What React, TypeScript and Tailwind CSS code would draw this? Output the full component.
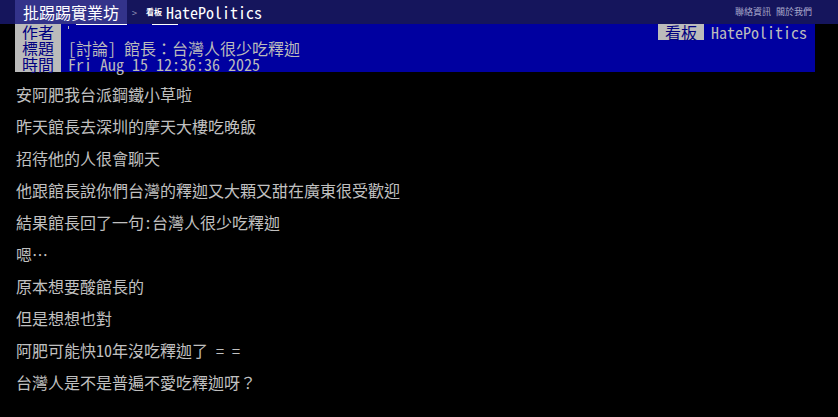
import React from 'react';

const MONO = "font-['Noto_Sans_Mono_CJK_TC','Noto_Sans_Mono_CJK_JP','Liberation_Mono','Noto_Sans_CJK_TC',monospace]";

const lines = [
    '安阿肥我台派鋼鐵小草啦',
    '昨天館長去深圳的摩天大樓吃晚飯',
    '招待他的人很會聊天',
    '他跟館長說你們台灣的釋迦又大顆又甜在廣東很受歡迎',
    '結果館長回了一句:台灣人很少吃釋迦',
    '嗯…',
    '原本想要酸館長的',
    '但是想想也對',
    '阿肥可能快10年沒吃釋迦了 = =',
    '台灣人是不是普遍不愛吃釋迦呀？',
];

const MetaRow: React.FC<{ label: string; children?: React.ReactNode; right?: React.ReactNode }> = ({ label, children, right }) => (
    <div className="flex h-4 leading-4">
        <span className="w-[46px] shrink-0 bg-[#bbbbbb] text-[#000080] text-center">{label}</span>
        <span className="flex-1 pl-[7px] text-[#bbbbbb] relative whitespace-nowrap">{children}</span>
        {right}
    </div>
);

export default function App() {
    return (
        <div className={`min-h-[417px] bg-black text-[16px] ${MONO}`}>
            {/* topbar */}
            <div className="h-6 bg-[#15155c] flex items-stretch pl-[15px] pr-[26px]">
                <span className="bg-[#33338a] text-white px-[8px] leading-6 text-[16px] font-['Noto_Sans_CJK_TC',sans-serif]">批踢踢實業坊</span>
                <span className="ml-[5px] text-[#9999bb] text-[10px] leading-6 pt-[1px]">&gt;</span>
                <span className="ml-[9px] text-white text-[8px] leading-6 font-bold font-['Noto_Sans_CJK_TC',sans-serif]">看板</span>
                <span className="ml-[4px] text-white leading-6">HatePolitics</span>
                <span className="ml-auto text-[#aaaacc] text-[9px] leading-6 font-['Noto_Sans_CJK_TC',sans-serif] flex gap-[5px]">
                    <span>聯絡資訊</span>
                    <span>關於我們</span>
                </span>
            </div>

            {/* article meta */}
            <div className="ml-[15px] w-[800px] bg-[#0000a0]">
                <MetaRow
                    label="作者"
                    right={
                        <span className="flex shrink-0 pr-[8px]">
                            <span className="bg-[#bbbbbb] text-[#000080] px-[7px]">看板</span>
                            <span className="pl-[7px] text-[#bbbbbb]">HatePolitics</span>
                        </span>
                    }
                >
                    <span className="absolute left-[7px] top-[2px] w-px h-[3px] bg-[#bbbbbb]" />
                    <span className="absolute left-[15px] top-0 w-[51px] h-px bg-white" />
                    <span className="absolute left-[91px] top-0 w-[26px] h-px bg-white" />
                </MetaRow>
                <MetaRow label="標題">[討論] 館長：台灣人很少吃釋迦</MetaRow>
                <MetaRow label="時間">Fri Aug 15 12:36:36 2025</MetaRow>
            </div>

            {/* content */}
            <div className="pt-[6px] pl-4 text-[#c0c0c0]">
                {lines.map((l, i) => (
                    <div key={i} className="leading-8 whitespace-pre">{l}</div>
                ))}
            </div>
        </div>
    );
}
